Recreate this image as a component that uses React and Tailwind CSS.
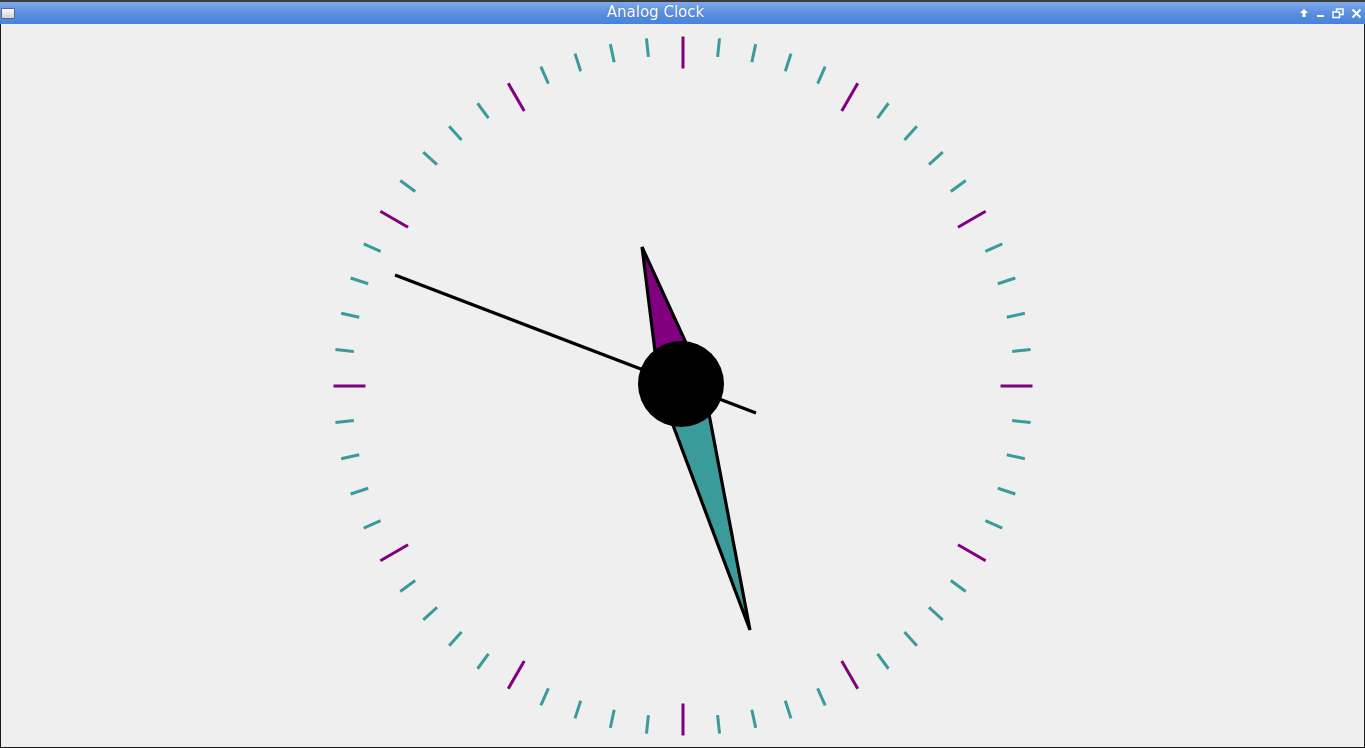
import React from 'react'

const CX = 682
const CY = 362
const PURPLE = '#800080'
const TEAL = '#3a9b9a'

function ticks() {
  const out = []
  for (let i = 0; i < 60; i++) {
    const a = (i * 6 * Math.PI) / 180
    const hour = i % 5 === 0
    const r1 = hour ? 317.5 : 331
    const r2 = 349.5
    const s = Math.sin(a)
    const c = Math.cos(a)
    out.push(
      <line
        key={i}
        x1={CX + s * r1}
        y1={CY - c * r1}
        x2={CX + s * r2}
        y2={CY - c * r2}
        stroke={hour ? PURPLE : TEAL}
        strokeWidth="3"
      />
    )
  }
  return out
}

function kite(cx, cy, tx, ty, half, tail) {
  const dx = tx - cx
  const dy = ty - cy
  const len = Math.hypot(dx, dy)
  const ux = dx / len
  const uy = dy / len
  const px = -uy
  const py = ux
  const pts = [
    [tx, ty],
    [cx + px * half, cy + py * half],
    [cx - ux * tail, cy - uy * tail],
    [cx - px * half, cy - py * half],
  ]
  return pts.map((p) => p.join(',')).join(' ')
}

function ClockFace() {
  // hub is drawn slightly up-left of the dial centre, as in the original
  const hx = 680
  const hy = 360
  return (
    <svg width="1363" height="723" viewBox="0 0 1363 723" className="block">
      {ticks()}
      <polygon
        points={kite(hx, hy, 749, 606, 22, 30)}
        fill={TEAL}
        stroke="#000"
        strokeWidth="3.2"
      />
      <polygon
        points={kite(hx, hy, 641, 223, 22, 30)}
        fill={PURPLE}
        stroke="#000"
        strokeWidth="3.2"
      />
      <line x1="394" y1="251" x2="755" y2="389" stroke="#000" strokeWidth="3.2" />
      <circle cx={hx} cy={hy} r="43" fill="#000" />
    </svg>
  )
}

export default function App() {
  return (
    <div
      className="w-[1365px] h-[748px] flex flex-col overflow-hidden bg-[#efefef]"
      style={{ fontFamily: '"DejaVu Sans", sans-serif' }}
    >
      {/* Title bar */}
      <div className="h-[24px] flex flex-col shrink-0">
        <div className="h-[2px] bg-[#3c3c3c]" />
        <div className="flex-1 flex items-center bg-gradient-to-b from-[#7fa9e8] via-[#5a8fe0] to-[#4682dc]">
          <div className="w-[16px] pl-[1px] flex items-center">
            <div className="w-[14px] h-[11px] border border-[#5a6b85] bg-gradient-to-b from-[#ffffff] to-[#cfcfcf] rounded-[1px]" />
          </div>
          <div className="flex-1 text-center text-white text-[15px] leading-none pb-[1px] [text-shadow:0_0_1px_rgba(0,40,100,0.5)]">
            Analog Clock
          </div>
          <div className="w-[70px] flex items-center justify-end gap-[7px] pr-[3px] text-white">
            <svg width="10" height="10" viewBox="0 0 10 10">
              <path d="M5 1 L9 5 L6.5 5 L6.5 9 L3.5 9 L3.5 5 L1 5 Z" fill="#fff" />
            </svg>
            <svg width="9" height="10" viewBox="0 0 9 10">
              <rect x="1" y="7" width="7" height="2" fill="#fff" />
            </svg>
            <svg width="12" height="11" viewBox="0 0 12 11">
              <rect x="4.5" y="1" width="6.5" height="5.5" fill="none" stroke="#fff" strokeWidth="1.5" />
              <rect x="1" y="4" width="6.5" height="5.5" fill="#4a86dc" stroke="#fff" strokeWidth="1.5" />
            </svg>
            <svg width="11" height="11" viewBox="0 0 11 11">
              <path d="M1.5 1.5 L9.5 9.5 M9.5 1.5 L1.5 9.5" stroke="#fff" strokeWidth="2" />
            </svg>
          </div>
        </div>
      </div>
      {/* Clock area */}
      <div className="flex-1 border-x border-b border-[#1a1a1a] bg-[#efefef]">
        <ClockFace />
      </div>
    </div>
  )
}
